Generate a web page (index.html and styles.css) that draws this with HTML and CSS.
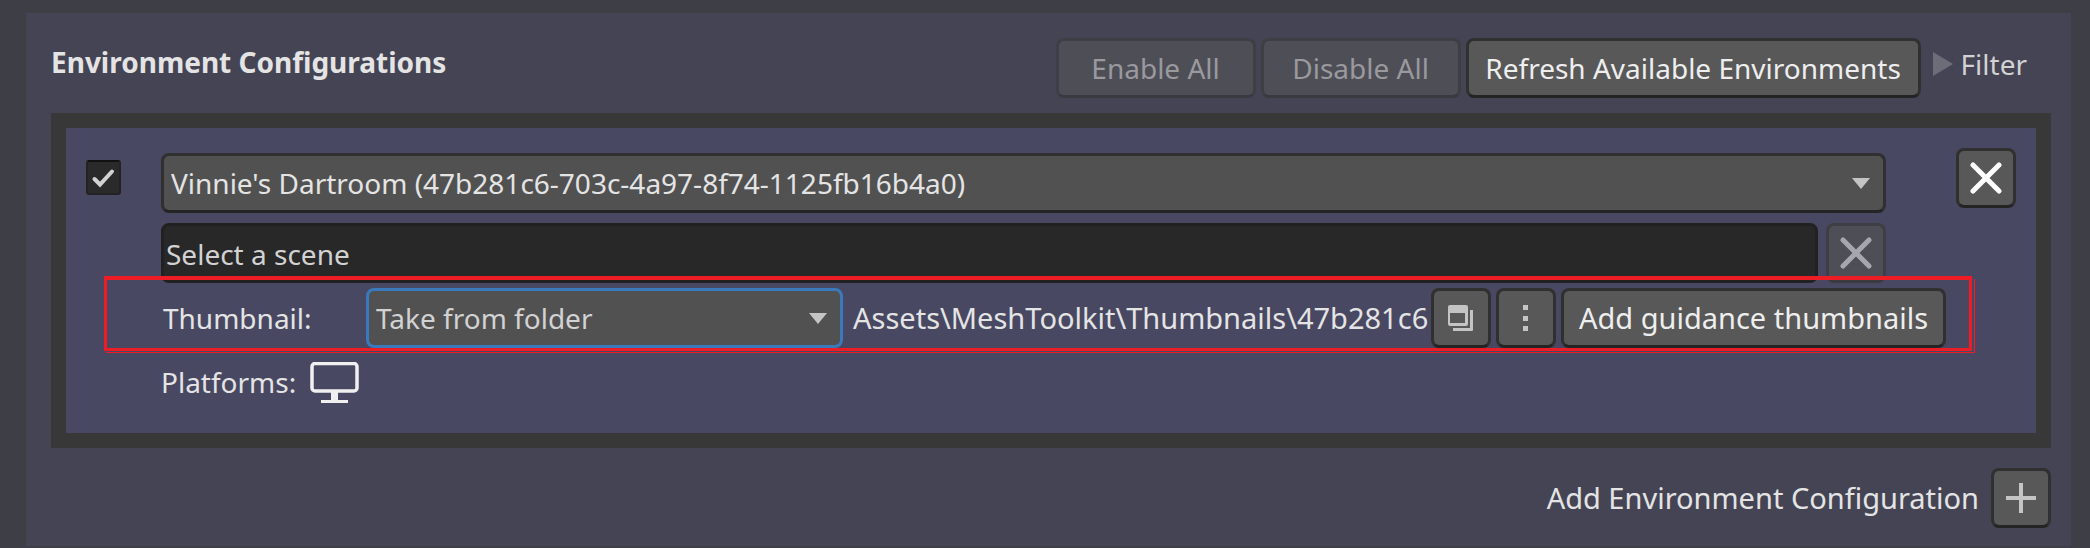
FILE: index.html
```html
<!DOCTYPE html>
<html lang="en">
<head>
<meta charset="utf-8">
<title>Environment Configurations</title>
<link rel="stylesheet" href="styles.css">
</head>
<body>
<main class="panel">
  <header class="toolbar">
    <h1 class="title">Environment Configurations</h1>
    <div class="actions">
      <button class="btn btn-fixed" type="button" disabled>Enable All</button>
      <button class="btn btn-fixed" type="button" disabled>Disable All</button>
      <button class="btn btn-refresh" type="button">Refresh Available Environments</button>
      <button class="filter" type="button" aria-expanded="false">
        <svg width="20" height="24" viewBox="0 0 20 24" aria-hidden="true"><path d="M0 0L20 12L0 24Z" fill="#6d6d7a"/></svg>
        <span>Filter</span>
      </button>
    </div>
  </header>

  <section class="card">
    <label class="check">
      <input type="checkbox" checked aria-label="Enable environment">
      <svg width="35" height="35" viewBox="0 0 35 35" aria-hidden="true"><path d="M8.500 19L14 24.500L26 11.500" fill="none" stroke="#d2d2d2" stroke-width="4" stroke-linecap="round"/></svg>
    </label>

    <div class="fields">
      <div class="dropdown">
        <select class="field" aria-label="Environment">
          <option>Vinnie's Dartroom (47b281c6-703c-4a97-8f74-1125fb16b4a0)</option>
        </select>
        <svg class="arrow" width="18" height="11" viewBox="0 0 18 11" aria-hidden="true"><path d="M0 0H18L9 11Z" fill="#c4c4c4"/></svg>
      </div>
      <div class="scene-row">
        <input class="scene" type="text" value="Select a scene" aria-label="Scene">
        <button class="btn btn-icon" type="button" disabled aria-label="Clear scene">
          <svg width="32" height="32" viewBox="0 0 32 32" aria-hidden="true"><path d="M3 3L29 29M29 3L3 29" stroke="#a6a6ad" stroke-width="5" stroke-linecap="round"/></svg>
        </button>
      </div>
    </div>

    <button class="btn btn-icon remove" type="button" aria-label="Remove environment">
      <svg width="32" height="32" viewBox="0 0 32 32" aria-hidden="true"><path d="M3 3L29 29M29 3L3 29" stroke="#fff" stroke-width="5" stroke-linecap="round"/></svg>
    </button>

    <div class="thumb-row">
      <label class="thumb-label" for="thumb">Thumbnail:</label>
      <div class="dropdown thumb-source">
        <select class="field field-focus" id="thumb">
          <option>Take from folder</option>
        </select>
        <svg class="arrow" width="18" height="11" viewBox="0 0 18 11" aria-hidden="true"><path d="M0 0H18L9 11Z" fill="#c4c4c4"/></svg>
      </div>
      <span class="path">Assets\MeshToolkit\Thumbnails\47b281c6</span>
      <button class="btn btn-icon" type="button" aria-label="Browse folder">
        <svg width="26" height="27" viewBox="0 0 26 27" aria-hidden="true" fill="#c4c4c4"><path fill-rule="evenodd" d="M2 0H18Q20 0 20 2V19Q20 21 18 21H2Q0 21 0 19V2Q0 0 2 0ZM2 8V18H17V8Z"/><path d="M22 5H25V25Q25 26 24 26H5V23H22Z"/></svg>
      </button>
      <button class="btn btn-icon" type="button" aria-label="More options">
        <svg width="6" height="27" viewBox="0 0 6 27" aria-hidden="true" fill="#c4c4c4"><path d="M0 0H5V5H0ZM0 11H5V16H0ZM0 21H5V26H0Z"/></svg>
      </button>
      <button class="btn btn-guidance" type="button">Add guidance thumbnails</button>
      <div class="highlight"></div>
    </div>

    <div class="platforms">
      <span>Platforms:</span>
      <svg width="49" height="41" viewBox="0 0 49 41" role="img" aria-label="Desktop"><rect x="2" y="1.500" width="45" height="27.500" rx="3" fill="none" stroke="#f0f0f0" stroke-width="3.500"/><path d="M21 30H28V38H38V41H11V38H21Z" fill="#f0f0f0"/></svg>
    </div>
  </section>

  <footer class="footer">
    <label for="add">Add Environment Configuration</label>
    <button class="btn btn-icon" id="add" type="button">
      <svg width="30" height="30" viewBox="0 0 30 30" aria-hidden="true"><path d="M0 15H30M15 0V30" stroke="#c4c4c4" stroke-width="4"/></svg>
    </button>
  </footer>
</main>
</body>
</html>
```
FILE: styles.css
```css
* { box-sizing: border-box; }

body {
  margin: 0;
  padding: 13px 19px 2px 26px;
  background: #3e3e46;
  color: #e4e4e4;
  font: 28px/38px "Noto Sans", "Open Sans", sans-serif;
}

button, input, select { font: inherit; color: inherit; margin: 0; }
svg { display: block; flex: none; }

.panel {
  padding: 25px 20px 18px 25px;
  background: #444455;
}

.toolbar {
  display: flex;
  justify-content: space-between;
  align-items: flex-start;
  padding-right: 24px;
}

.title {
  margin: 0;
  padding-top: 4px;
  font-size: 28px;
  line-height: 40px;
  font-weight: 700;
}

.actions { display: flex; gap: 5px; }

.btn {
  display: flex;
  align-items: center;
  justify-content: center;
  flex: none;
  height: 60px;
  padding: 0 12px;
  border: 3px solid #303030;
  border-bottom-color: #242424;
  border-radius: 8px;
  background: #585858;
  color: #eeeeee;
  white-space: nowrap;
}

.btn:disabled {
  border-color: #3e3e44;
  border-bottom-color: #39393f;
  background: #4e4e57;
  color: #99999e;
}

.btn-fixed { width: 200px; }
.btn-refresh { width: 455px; }
.btn-guidance { width: 385px; font-size: 29px; }
.btn-icon { width: 60px; padding: 0; }

.filter {
  display: flex;
  align-items: center;
  gap: 8px;
  height: 52px;
  margin-left: 7px;
  padding: 0;
  border: 0;
  background: none;
  color: #d2d2d2;
}

.card {
  display: grid;
  grid-template-columns: 75px 1fr 130px;
  row-gap: 5px;
  margin-top: 15px;
  padding: 20px 20px 28px;
  border: 15px solid #383838;
  background: #484862;
}

.check {
  position: relative;
  width: 35px;
  height: 35px;
  margin-top: 12px;
}

.check input {
  display: block;
  appearance: none;
  width: 35px;
  height: 35px;
  border: 2px solid #222222;
  border-top-color: #111111;
  border-radius: 3px;
  background: #2a2a2a;
}

.check svg { position: absolute; inset: 0; pointer-events: none; }
.check input:not(:checked) + svg { display: none; }

.fields {
  display: flex;
  flex-direction: column;
  gap: 10px;
  padding-top: 5px;
}

.dropdown { position: relative; }

.field {
  display: block;
  appearance: none;
  width: 100%;
  height: 60px;
  padding: 0 50px 0 7px;
  border: 3px solid #303030;
  border-bottom-color: #242424;
  border-radius: 8px;
  background: #515151;
}

.field-focus {
  border-color: #3a79bb;
  color: #d2d2d2;
  outline: none;
}

.arrow {
  position: absolute;
  top: 25px;
  right: 16px;
  pointer-events: none;
}

.scene-row { display: flex; gap: 8px; }

.scene {
  flex: 1;
  min-width: 0;
  height: 60px;
  padding: 2px 2px 0;
  border: 3px solid #212121;
  border-radius: 8px;
  background: #282828;
  color: #d2d2d2;
}

.remove { justify-self: end; }

.thumb-row {
  position: relative;
  grid-column: 2 / 4;
  display: flex;
  align-items: center;
  gap: 5px;
  margin-right: 70px;
}

.thumb-label { width: 200px; padding-left: 2px; }
.thumb-source { width: 477px; }
.path { flex: 1; min-width: 0; padding-left: 5px; font-size: 29px; white-space: nowrap; }

.highlight {
  position: absolute;
  inset: -12px -26px -3px -57px;
  border: 3px solid #ee1c24;
  border-top-width: 4px;
  pointer-events: none;
}

.highlight::after {
  content: "";
  position: absolute;
  inset: -1px -6px -5px -1px;
  border: solid #ee1c24;
  border-width: 0 1px 1px 0;
}

.platforms {
  grid-column: 2 / 4;
  display: flex;
  align-items: center;
  gap: 14px;
  height: 52px;
  padding-top: 6px;
}

.footer {
  display: flex;
  justify-content: flex-end;
  align-items: center;
  gap: 12px;
  margin-top: 20px;
  font-size: 29px;
}
```
